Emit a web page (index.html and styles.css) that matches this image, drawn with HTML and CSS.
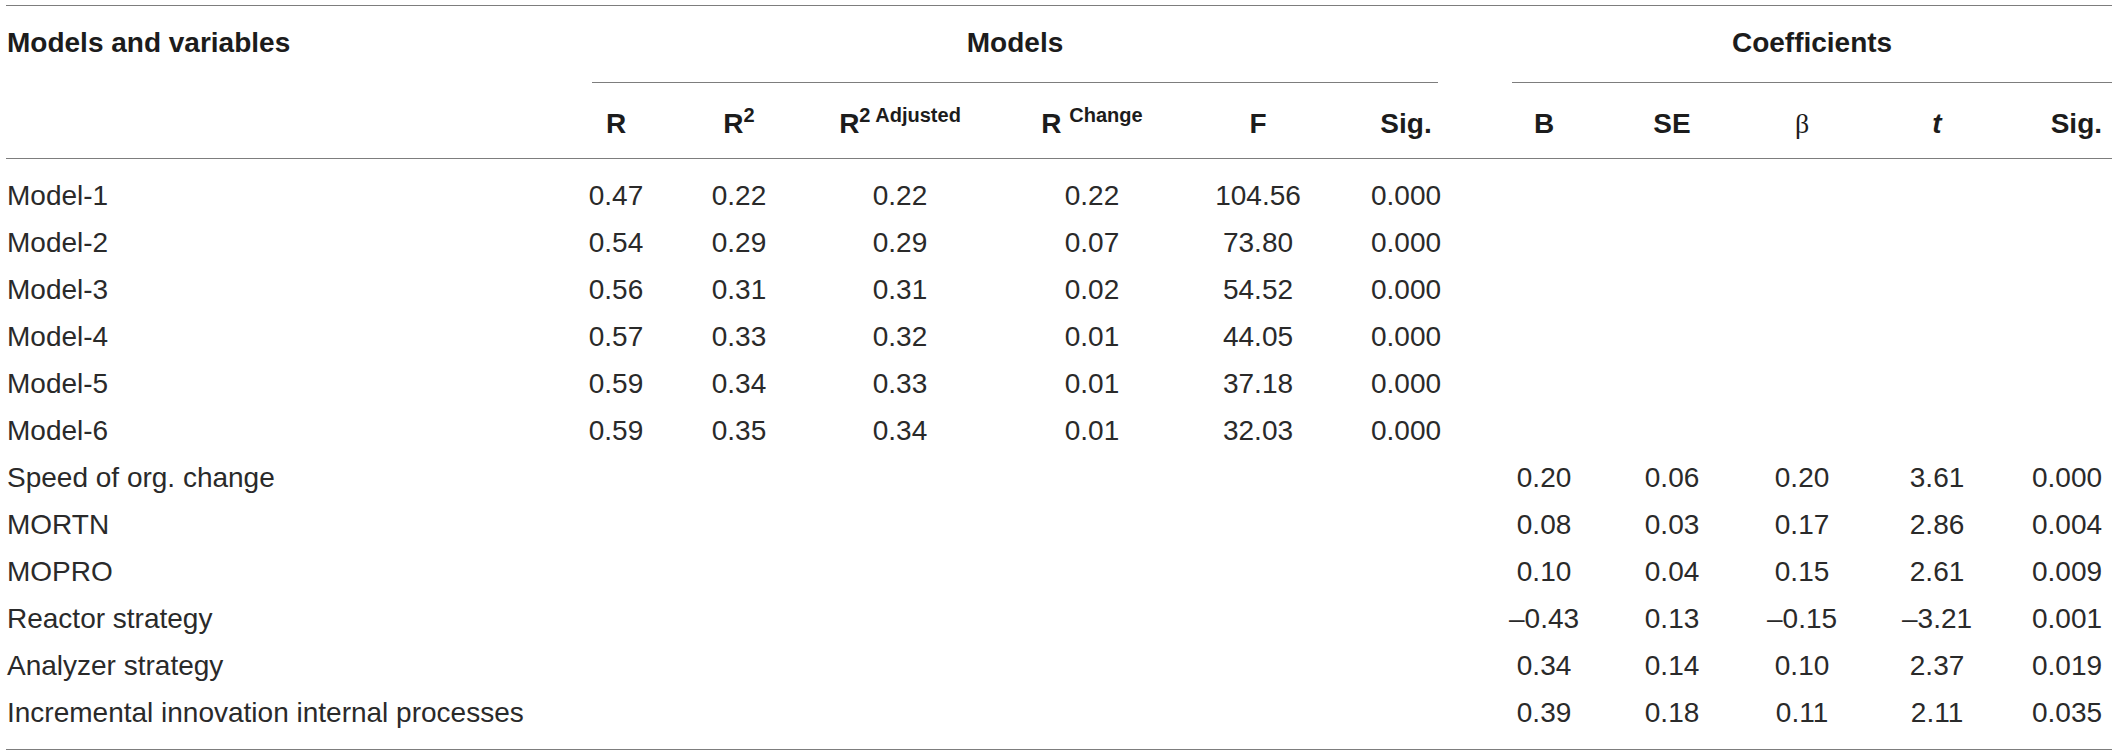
FILE: index.html
```html
<!DOCTYPE html>
<html lang="en">
<head>
<meta charset="utf-8">
<title>Regression models and coefficients</title>
<link rel="stylesheet" href="styles.css">
</head>
<body>
<table class="tbl">
  <colgroup>
    <col class="c-label">
    <col class="c-r">
    <col class="c-r2">
    <col class="c-adj">
    <col class="c-chg">
    <col class="c-f">
    <col class="c-sig">
    <col class="c-b">
    <col class="c-se">
    <col class="c-beta">
    <col class="c-t">
    <col class="c-sig2">
  </colgroup>
  <thead>
    <tr class="h1">
      <th class="lbl"><div class="grp grp-none">Models and variables</div></th>
      <th colspan="6"><div class="grp grp-models">Models</div></th>
      <th colspan="5"><div class="grp grp-coef">Coefficients</div></th>
    </tr>
    <tr class="h2">
      <th class="lbl"></th>
      <th>R</th>
      <th>R<sup>2</sup></th>
      <th>R<sup>2 Adjusted</sup></th>
      <th>R <sup>Change</sup></th>
      <th>F</th>
      <th>Sig.</th>
      <th>B</th>
      <th>SE</th>
      <th class="beta">β</th>
      <th class="tt">t</th>
      <th class="end">Sig.</th>
    </tr>
  </thead>
  <tbody>
    <tr class="first"><td class="lbl">Model-1</td><td>0.47</td><td>0.22</td><td>0.22</td><td>0.22</td><td>104.56</td><td>0.000</td><td></td><td></td><td></td><td></td><td class="end"></td></tr>
    <tr><td class="lbl">Model-2</td><td>0.54</td><td>0.29</td><td>0.29</td><td>0.07</td><td>73.80</td><td>0.000</td><td></td><td></td><td></td><td></td><td class="end"></td></tr>
    <tr><td class="lbl">Model-3</td><td>0.56</td><td>0.31</td><td>0.31</td><td>0.02</td><td>54.52</td><td>0.000</td><td></td><td></td><td></td><td></td><td class="end"></td></tr>
    <tr><td class="lbl">Model-4</td><td>0.57</td><td>0.33</td><td>0.32</td><td>0.01</td><td>44.05</td><td>0.000</td><td></td><td></td><td></td><td></td><td class="end"></td></tr>
    <tr><td class="lbl">Model-5</td><td>0.59</td><td>0.34</td><td>0.33</td><td>0.01</td><td>37.18</td><td>0.000</td><td></td><td></td><td></td><td></td><td class="end"></td></tr>
    <tr><td class="lbl">Model-6</td><td>0.59</td><td>0.35</td><td>0.34</td><td>0.01</td><td>32.03</td><td>0.000</td><td></td><td></td><td></td><td></td><td class="end"></td></tr>
    <tr><td class="lbl">Speed of org. change</td><td></td><td></td><td></td><td></td><td></td><td></td><td>0.20</td><td>0.06</td><td>0.20</td><td>3.61</td><td class="end">0.000</td></tr>
    <tr><td class="lbl">MORTN</td><td></td><td></td><td></td><td></td><td></td><td></td><td>0.08</td><td>0.03</td><td>0.17</td><td>2.86</td><td class="end">0.004</td></tr>
    <tr><td class="lbl">MOPRO</td><td></td><td></td><td></td><td></td><td></td><td></td><td>0.10</td><td>0.04</td><td>0.15</td><td>2.61</td><td class="end">0.009</td></tr>
    <tr><td class="lbl">Reactor strategy</td><td></td><td></td><td></td><td></td><td></td><td></td><td>–0.43</td><td>0.13</td><td>–0.15</td><td>–3.21</td><td class="end">0.001</td></tr>
    <tr><td class="lbl">Analyzer strategy</td><td></td><td></td><td></td><td></td><td></td><td></td><td>0.34</td><td>0.14</td><td>0.10</td><td>2.37</td><td class="end">0.019</td></tr>
    <tr class="last"><td class="lbl">Incremental innovation internal processes</td><td></td><td></td><td></td><td></td><td></td><td></td><td>0.39</td><td>0.18</td><td>0.11</td><td>2.11</td><td class="end">0.035</td></tr>
  </tbody>
</table>
</body>
</html>
```

FILE: styles.css
```css
html, body {
  margin: 0;
  padding: 0;
  background: #ffffff;
}

body {
  font-family: "Liberation Sans", Arial, Helvetica, sans-serif;
  font-size: 28px;
  color: #2a2a2a;
}

.tbl {
  margin: 5px 0 0 6px;
  width: 2106px;
  table-layout: fixed;
  border-collapse: separate;
  border-spacing: 0;
}

.c-label { width: 549px; }
.c-r { width: 122px; }
.c-r2 { width: 124px; }
.c-adj { width: 198px; }
.c-chg { width: 186px; }
.c-f { width: 146px; }
.c-sig { width: 150px; }
.c-b { width: 126px; }
.c-se { width: 130px; }
.c-beta { width: 130px; }
.c-t { width: 140px; }
.c-sig2 { width: 105px; }

th, td {
  padding: 0;
  text-align: center;
  white-space: nowrap;
}

th {
  font-weight: 700;
  color: #1c1c1c;
}

.lbl {
  text-align: left;
  padding-left: 1px;
}

/* header row 1 */
.h1 th {
  border-top: 1px solid #7d7d7d;
  vertical-align: top;
}

.grp {
  height: 76px;
  line-height: 74px;
}

.grp-models {
  margin: 0 43px 0 37px;
  border-bottom: 1px solid #7d7d7d;
}

.grp-coef {
  margin: 0 0 0 31px;
  border-bottom: 1px solid #7d7d7d;
}

/* header row 2 */
.h2 th {
  padding-top: 7px;
  line-height: 68px;
  border-bottom: 1px solid #7d7d7d;
  vertical-align: top;
}

.h2 sup {
  font-size: 20px;
  line-height: 0;
  vertical-align: 11px;
}

.beta {
  font-family: "Liberation Serif", "Times New Roman", serif;
  font-weight: 400;
  font-size: 28px;
}

.tt {
  font-style: italic;
}

/* last column is set flush right */
th.end,
td.end {
  text-align: right;
  padding-right: 10px;
}

/* body */
td {
  line-height: 47px;
  vertical-align: top;
}

.first td {
  padding-top: 13px;
}

.last td {
  padding-bottom: 13px;
  border-bottom: 1px solid #7d7d7d;
}

td.lbl {
  padding-left: 1px;
}
```
